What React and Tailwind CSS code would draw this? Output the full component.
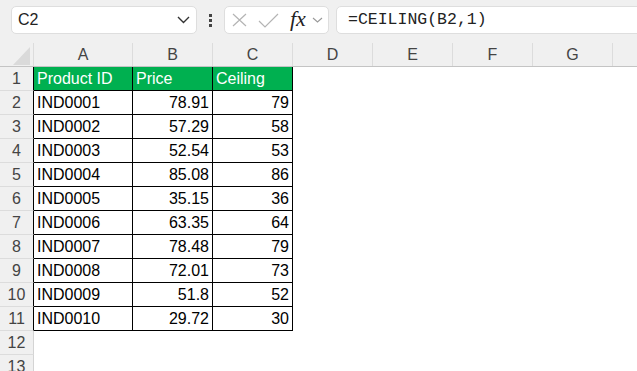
const cols = ['A', 'B', 'C', 'D', 'E', 'F', 'G']
const widths = ['w-[99px]', 'w-[80px]', 'w-[80px]', 'w-[80px]', 'w-[80px]', 'w-[80px]', 'w-[80px]']

const rows = [
  ['IND0001', '78.91', '79'],
  ['IND0002', '57.29', '58'],
  ['IND0003', '52.54', '53'],
  ['IND0004', '85.08', '86'],
  ['IND0005', '35.15', '36'],
  ['IND0006', '63.35', '64'],
  ['IND0007', '78.48', '79'],
  ['IND0008', '72.01', '73'],
  ['IND0009', '51.8', '52'],
  ['IND0010', '29.72', '30'],
]

function RowHead({ n, inTable }) {
  return (
    <div
      className={`w-[34px] shrink-0 h-full flex items-center justify-center bg-[#f0f0f0] border-b border-b-[#dcdcdc] border-r text-[#444] ${
        inTable ? 'border-r-black' : 'border-r-[#d4d4d4]'
      }`}
    >
      {n}
    </div>
  )
}

export default function App() {
  return (
    <div className="w-[637px] h-[371px] overflow-hidden bg-white font-['Liberation_Sans',Arial,sans-serif] text-[16px] text-black">
      {/* Barra de fórmulas */}
      <div className="h-[43px] bg-[#f0f0f0] flex items-start pt-[6px] pl-[11px]">
        <div className="w-[186px] h-[28px] shrink-0 bg-white rounded-[5px] border border-[#dedede] flex items-center justify-between pl-[6px] pr-[6px] text-[16px] text-[#222]">
          <span>C2</span>
          <svg width="13" height="8" viewBox="0 0 13 8" fill="none" stroke="#333" strokeWidth="1.4">
            <path d="M1 1l5.5 5.5L12 1" />
          </svg>
        </div>
        <div className="w-[27px] shrink-0 h-[28px] flex flex-col items-center justify-center gap-[2px]">
          <span className="w-[3px] h-[3px] bg-[#444]" />
          <span className="w-[3px] h-[3px] bg-[#444]" />
          <span className="w-[3px] h-[3px] bg-[#444]" />
        </div>
        <div className="w-[105px] h-[28px] shrink-0 bg-white rounded-[5px] border border-[#dedede] flex items-center pl-[7px]">
          <svg width="15" height="14" viewBox="0 0 15 14" fill="none" stroke="#b4b4b4" strokeWidth="1.2">
            <path d="M1 1l13 12M14 1L1 13" />
          </svg>
          <svg className="ml-[11px]" width="21" height="15" viewBox="0 0 21 15" fill="none" stroke="#b4b4b4" strokeWidth="1.2">
            <path d="M1 8l6 6L20 1" />
          </svg>
          <span className="ml-[11px] font-['Liberation_Serif',serif] italic text-[22px] leading-none text-[#222] -mt-[2px]">fx</span>
          <svg className="ml-[6px]" width="11" height="6" viewBox="0 0 11 6" fill="none" stroke="#999" strokeWidth="1.1">
            <path d="M1 1l4.5 4L10 1" />
          </svg>
        </div>
        <div className="ml-[7px] w-[320px] h-[28px] shrink-0 bg-white rounded-l-[5px] border border-[#dedede] flex items-center pl-[11px] font-['Liberation_Mono',monospace] text-[16.5px] text-[#222]">
          =CEILING(B2,1)
        </div>
      </div>

      {/* Encabezado de columnas */}
      <div className="h-[24px] flex bg-[#f0f0f0] border-b border-b-[#c4c4c4] text-[#444]">
        <div className="w-[34px] shrink-0 h-full relative border-r border-r-[#dcdcdc]">
          <svg className="absolute right-[3px] bottom-[1px]" width="17" height="18" viewBox="0 0 17 18">
            <path d="M17 0V18H0Z" fill="#dadada" />
          </svg>
        </div>
        {cols.map((c, i) => (
          <div key={c} className={`${widths[i]} shrink-0 h-full flex items-center justify-center border-r border-r-[#dcdcdc]`}>
            {c}
          </div>
        ))}
        <div className="flex-1" />
      </div>

      {/* Fila 1: títulos */}
      <div className="h-[24px] flex">
        <RowHead n={1} inTable />
        <div className="w-[99px] shrink-0 bg-[#00b050] text-white border-r border-b border-black flex items-center pl-[3px]">Product ID</div>
        <div className="w-[80px] shrink-0 bg-[#00b050] text-white border-r border-b border-black flex items-center pl-[3px]">Price</div>
        <div className="w-[80px] shrink-0 bg-[#00b050] text-white border-r border-b border-black flex items-center pl-[3px]">Ceiling</div>
      </div>

      {rows.map((r, i) => (
        <div key={r[0]} className="h-[24px] flex">
          <RowHead n={i + 2} inTable />
          <div className="w-[99px] shrink-0 border-r border-b border-black flex items-center pl-[3px]">{r[0]}</div>
          <div className="w-[80px] shrink-0 border-r border-b border-black flex items-center justify-end pr-[3px]">{r[1]}</div>
          <div className="w-[80px] shrink-0 border-r border-b border-black flex items-center justify-end pr-[3px]">{r[2]}</div>
        </div>
      ))}

      {[12, 13].map((n) => (
        <div key={n} className="h-[24px] flex">
          <RowHead n={n} />
        </div>
      ))}
    </div>
  )
}
